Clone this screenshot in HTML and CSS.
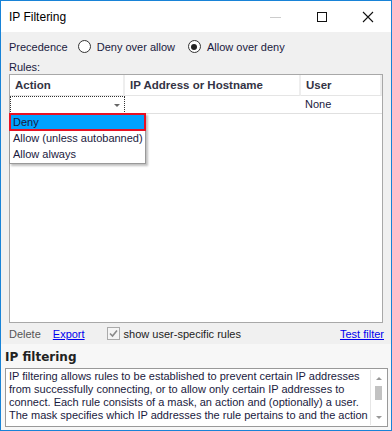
FILE: index.html
```html
<!DOCTYPE html>
<html lang="en">
<head>
  <meta charset="UTF-8">
  <title>IP Filtering</title>
  <link rel="stylesheet" href="styles.css">
</head>
<body>
  <div class="window">
    <div class="titlebar">
      <span class="title">IP Filtering</span>
      <div class="controls">
        <span class="ctl min"><svg width="12" height="12" viewBox="0 0 12 12"><path d="M0 6.5h11" stroke="#cccccc" stroke-width="1"/></svg></span>
        <span class="ctl"><svg width="12" height="12" viewBox="0 0 12 12"><rect x="1.5" y="1.5" width="9" height="9" fill="none" stroke="#111" stroke-width="1"/></svg></span>
        <span class="ctl"><svg width="12" height="12" viewBox="0 0 12 12"><path d="M1 1L11 11M11 1L1 11" stroke="#111" stroke-width="1.1"/></svg></span>
      </div>
    </div>

    <div class="content">
      <div class="precedence">
        <span>Precedence</span>
        <label class="radio"><span class="dot"></span>Deny over allow</label>
        <label class="radio"><span class="dot on"></span>Allow over deny</label>
      </div>
      <div class="rules-label">Rules:</div>

      <div class="grid">
        <div class="head">Action</div>
        <div class="head">IP Address or Hostname</div>
        <div class="head">User</div>
        <div class="cell edit"><span class="arrow"></span></div>
        <div class="cell"></div>
        <div class="cell">None</div>

        <div class="popup">
          <div class="item active">Deny</div>
          <div class="item">Allow (unless autobanned)</div>
          <div class="item">Allow always</div>
        </div>
      </div>

      <div class="actions">
        <span class="disabled">Delete</span>
        <a href="#" class="link">Export</a>
        <label class="check"><span class="box"><svg width="11" height="11" viewBox="0 0 11 11"><path d="M2 5.5L4.5 8L9 2.5" fill="none" stroke="#8a8a8a" stroke-width="1.6"/></svg></span>show user-specific rules</label>
        <a href="#" class="link right">Test filter</a>
      </div>
    </div>

    <div class="help">
      <div class="help-title">IP filtering</div>
      <div class="help-box">
        <div class="help-text">IP filtering allows rules to be established to prevent certain IP addresses from successfully connecting, or to allow only certain IP addresses to connect. Each rule consists of a mask, an action and (optionally) a user. The mask specifies which IP addresses the rule pertains to and the action</div>
        <div class="scrollbar">
          <span class="up"></span>
          <span class="thumb"></span>
          <span class="down"></span>
        </div>
      </div>
    </div>
  </div>
</body>
</html>
```

FILE: styles.css
```css
html, body {
  margin: 0;
  padding: 0;
}
body {
  font-family: 'Liberation Sans', Arial, sans-serif;
  font-size: 11px;
  color: #1a1a1a;
}
.window {
  width: 392px;
  height: 431px;
  box-sizing: border-box;
  border: 1px solid #1883d7;
  display: flex;
  flex-direction: column;
  background: #f0f0f0;
}
.titlebar {
  height: 31px;
  flex: none;
  background: white;
  display: flex;
  align-items: center;
  padding-left: 8px;
}
.title {
  font-size: 12px;
  color: #000;
  flex: 1;
}
.controls {
  display: flex;
  align-self: stretch;
}
.ctl {
  width: 46px;
  display: flex;
  align-items: center;
  justify-content: center;
}
.content {
  padding: 0 7px 0 8px;
  display: flex;
  flex-direction: column;
  flex: 1;
  min-height: 0;
}
.precedence {
  height: 29px;
  display: flex;
  align-items: center;
  gap: 10px;
  color: #1a1a40;
}
.radio {
  display: flex;
  align-items: center;
  gap: 6px;
  margin-right: 3px;
}
.dot {
  width: 11px;
  height: 11px;
  border: 1px solid #333;
  border-radius: 50%;
  background: white;
  display: flex;
  align-items: center;
  justify-content: center;
}
.dot.on::after {
  content: "";
  width: 6px;
  height: 6px;
  border-radius: 50%;
  background: #222;
}
.rules-label {
  height: 13px;
  line-height: 13px;
  color: #1a1a40;
}
.grid {
  position: relative;
  flex: 1;
  background: white;
  border: 1px solid #a8a8a8;
  display: grid;
  grid-template-columns: 115px 176px 1fr;
  grid-template-rows: 21px 18px;
  align-content: start;
  margin-right: 1px;
}
.head {
  font-weight: bold;
  font-size: 11.5px;
  color: #333344;
  padding-left: 5px;
  line-height: 20px;
  border-right: 2px solid #eeeeee;
  border-bottom: 1px solid #e5e5e5;
}
.head:last-of-type {
  border-right: none;
}
.cell {
  padding-left: 4px;
  line-height: 17px;
  border-bottom: 1px solid #e0e0e0;
  color: #1a1a40;
}
.cell.edit {
  border: 1px dotted #333;
  position: relative;
}
.arrow {
  position: absolute;
  right: 4px;
  top: 7px;
  border-left: 3px solid transparent;
  border-right: 3px solid transparent;
  border-top: 3px solid #666;
}
.popup {
  position: absolute;
  left: -1px;
  top: 38px;
  width: 135px;
  background: white;
  border: 1px solid #999;
  box-shadow: 2px 2px 2px rgba(0,0,0,0.25);
  padding-bottom: 1px;
}
.item {
  height: 16px;
  line-height: 16px;
  padding-left: 3px;
  color: #1a1a40;
  white-space: nowrap;
  box-sizing: border-box;
}
.item.active {
  background: #00a2ff;
  outline: 2px solid #e81123;
  outline-offset: -1px;
  color: #1a1a40;
}
.actions {
  height: 21px;
  display: flex;
  align-items: center;
  color: #333;
}
.disabled {
  color: #555;
  margin-right: 12px;
}
.link {
  color: #0000ee;
  text-decoration: underline;
}
.check {
  margin-left: 22px;
  display: flex;
  align-items: center;
  gap: 4px;
  color: #222;
}
.box {
  width: 11px;
  height: 11px;
  border: 1px solid #aaa;
  background: #f5f5f5;
  display: flex;
  align-items: center;
  justify-content: center;
}
.right {
  margin-left: auto;
}
.help {
  height: 83px;
  flex: none;
  background: #f7f7f7;
  padding: 0 3px 3px 4px;
  display: flex;
  flex-direction: column;
}
.help-title {
  font-family: 'DejaVu Sans', sans-serif;
  font-weight: bold;
  font-size: 12px;
  height: 24px;
  line-height: 26px;
  color: #222;
}
.help-box {
  flex: 1;
  background: white;
  border: 1px solid #999;
  display: flex;
  overflow: hidden;
}
.help-text {
  flex: 1;
  padding: 1px 0 0 3px;
  line-height: 13px;
  color: #1a1a40;
  overflow: hidden;
}
.scrollbar {
  width: 15px;
  margin: 1px;
  border-left: 1px solid #e6e6e6;
  display: flex;
  flex-direction: column;
  align-items: center;
  padding-top: 7px;
}
.up, .down {
  border-left: 3px solid transparent;
  border-right: 3px solid transparent;
}
.up {
  border-bottom: 3px solid #999;
}
.down {
  border-top: 3px solid #999;
  margin-top: auto;
  margin-bottom: 6px;
}
.thumb {
  width: 7px;
  height: 14px;
  background: #c2c2c2;
  margin-top: 6px;
}
```
